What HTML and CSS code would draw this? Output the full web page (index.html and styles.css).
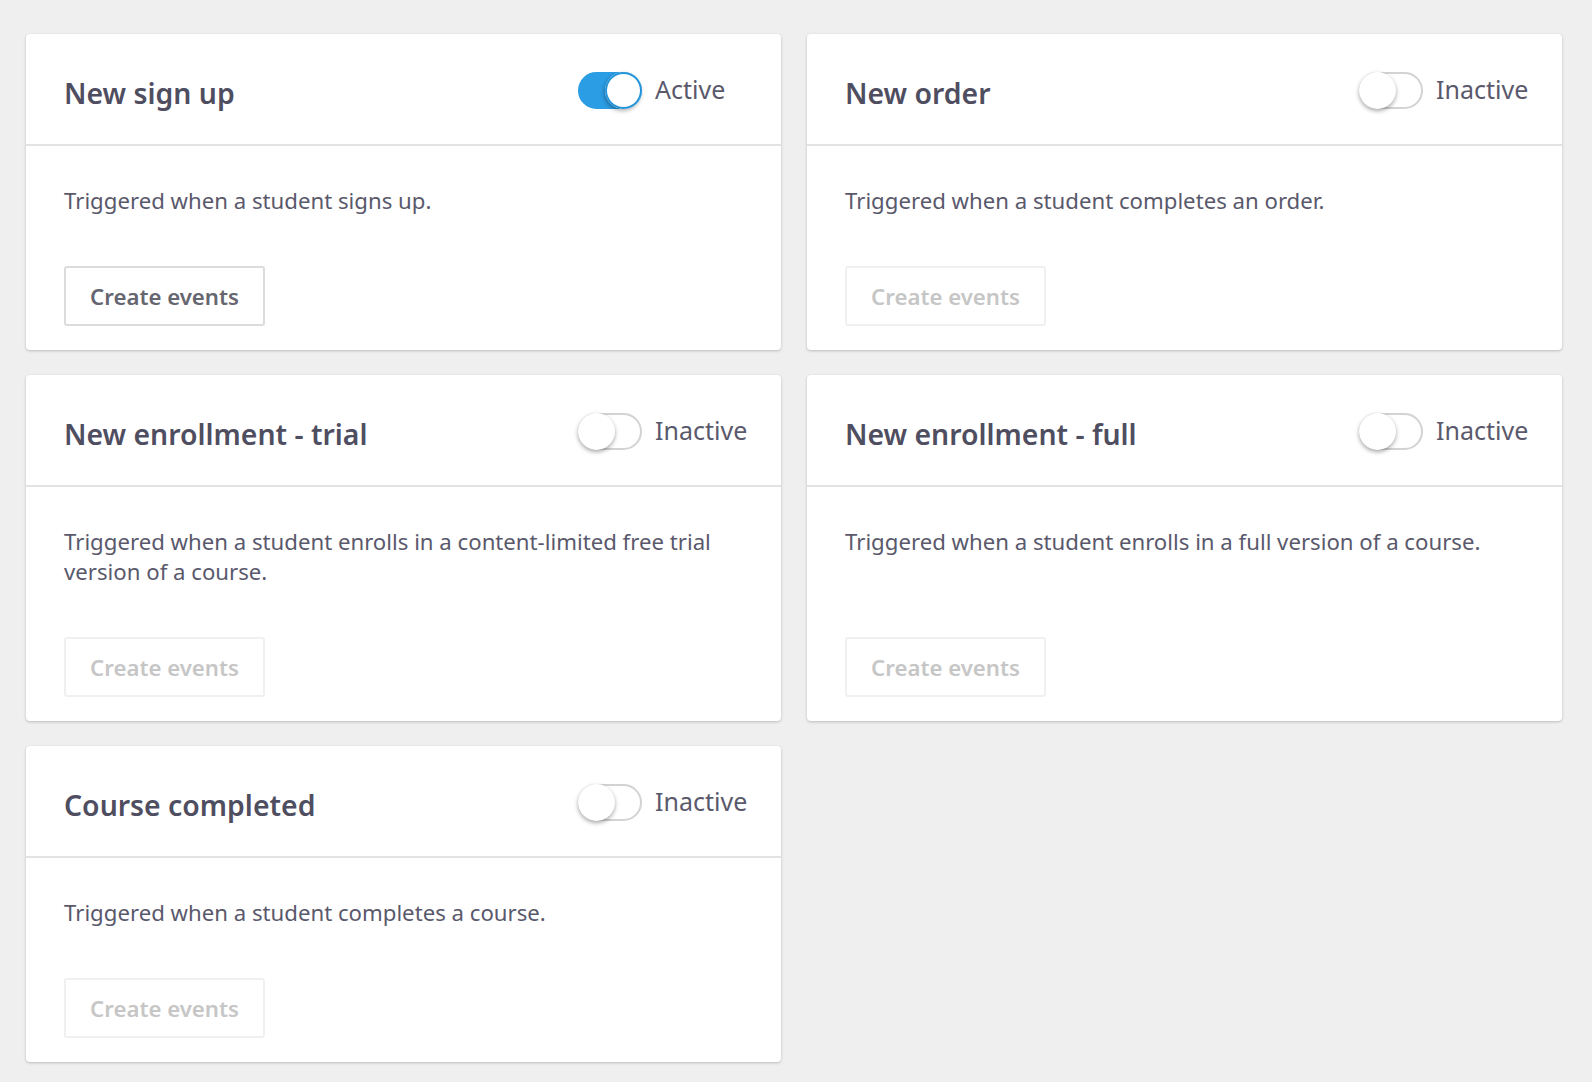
FILE: index.html
```html
<!DOCTYPE html>
<html lang="en">
<head>
<meta charset="utf-8">
<title>Triggers</title>
<link rel="stylesheet" href="styles.css">
</head>
<body>
<main class="grid">
  <section class="card">
    <header class="card-head">
      <h2 class="card-title">New sign up</h2>
      <div class="status">
        <span class="toggle toggle-on"><span class="knob"></span></span>
        <span class="status-label">Active</span>
      </div>
    </header>
    <div class="card-body">
      <p class="desc">Triggered when a student signs up.</p>
      <button class="btn" type="button">Create events</button>
    </div>
  </section>

  <section class="card">
    <header class="card-head">
      <h2 class="card-title">New order</h2>
      <div class="status">
        <span class="toggle"><span class="knob"></span></span>
        <span class="status-label">Inactive</span>
      </div>
    </header>
    <div class="card-body">
      <p class="desc">Triggered when a student completes an order.</p>
      <button class="btn btn-disabled" type="button">Create events</button>
    </div>
  </section>

  <section class="card">
    <header class="card-head">
      <h2 class="card-title">New enrollment - trial</h2>
      <div class="status">
        <span class="toggle"><span class="knob"></span></span>
        <span class="status-label">Inactive</span>
      </div>
    </header>
    <div class="card-body">
      <p class="desc">Triggered when a student enrolls in a content-limited free trial version of a course.</p>
      <button class="btn btn-disabled" type="button">Create events</button>
    </div>
  </section>

  <section class="card">
    <header class="card-head">
      <h2 class="card-title">New enrollment - full</h2>
      <div class="status">
        <span class="toggle"><span class="knob"></span></span>
        <span class="status-label">Inactive</span>
      </div>
    </header>
    <div class="card-body">
      <p class="desc">Triggered when a student enrolls in a full version of a course.</p>
      <button class="btn btn-disabled" type="button">Create events</button>
    </div>
  </section>

  <section class="card">
    <header class="card-head">
      <h2 class="card-title">Course completed</h2>
      <div class="status">
        <span class="toggle"><span class="knob"></span></span>
        <span class="status-label">Inactive</span>
      </div>
    </header>
    <div class="card-body">
      <p class="desc">Triggered when a student completes a course.</p>
      <button class="btn btn-disabled" type="button">Create events</button>
    </div>
  </section>
</main>
</body>
</html>
```

FILE: styles.css
```css
html, body {
  margin: 0;
  padding: 0;
  background: #efefef;
}

body {
  font-family: "Noto Sans", "Open Sans", "Liberation Sans", sans-serif;
  color: #5a596c;
}

.grid {
  display: grid;
  grid-template-columns: 1fr 1fr;
  column-gap: 26px;
  row-gap: 25px;
  padding: 34px 30px 20px 26px;
  align-items: stretch;
}

.card {
  display: flex;
  flex-direction: column;
  background: #ffffff;
  border-radius: 4px;
  box-shadow: 0 1px 3px rgba(0, 0, 0, 0.22);
}

.card-head {
  display: flex;
  align-items: center;
  height: 110px;
  padding: 0 36px 0 38px;
  border-bottom: 2px solid #e3e3e3;
}

.card-title {
  flex: 1;
  margin: 8px 0 0;
  font-size: 28.4px;
  font-weight: 600;
  color: #4f4e61;
}

.status {
  width: 167px;
  display: flex;
  align-items: center;
  gap: 13px;
  margin-top: 2px;
}

.status-label {
  font-size: 25px;
  color: #5a596c;
  margin-top: -2px;
}

.toggle {
  position: relative;
  box-sizing: border-box;
  width: 64px;
  height: 37px;
  border-radius: 19px;
  border: 2px solid #d3d3d3;
  background: #ffffff;
  flex: none;
}

.toggle .knob {
  position: absolute;
  top: -2px;
  left: -2px;
  width: 37px;
  height: 37px;
  border-radius: 50%;
  background: #ffffff;
  box-shadow: 0 2px 4px rgba(0, 0, 0, 0.35);
}

.toggle-on {
  background: #2b9de4;
  border-color: #2b9de4;
}

.toggle-on .knob {
  left: auto;
  right: -2px;
  box-shadow: -1px 2px 4px rgba(0, 0, 0, 0.3), inset 0 0 0 2px #2294da;
}

.card-body {
  flex: 1;
  display: flex;
  flex-direction: column;
  align-items: flex-start;
  padding: 40px 36px 24px 38px;
}

.desc {
  margin: 0 0 50px;
  font-size: 22.2px;
  line-height: 30px;
  color: #5a596c;
}

.btn {
  margin-top: auto;
  box-sizing: border-box;
  width: 201px;
  height: 60px;
  border: 2px solid #dcdcdc;
  border-radius: 3px;
  background: #ffffff;
  font-family: inherit;
  font-size: 22.2px;
  font-weight: 600;
  color: #666670;
  padding: 0;
}

.btn-disabled {
  border-color: #f0f0f0;
  color: #c6c6c6;
}
```
